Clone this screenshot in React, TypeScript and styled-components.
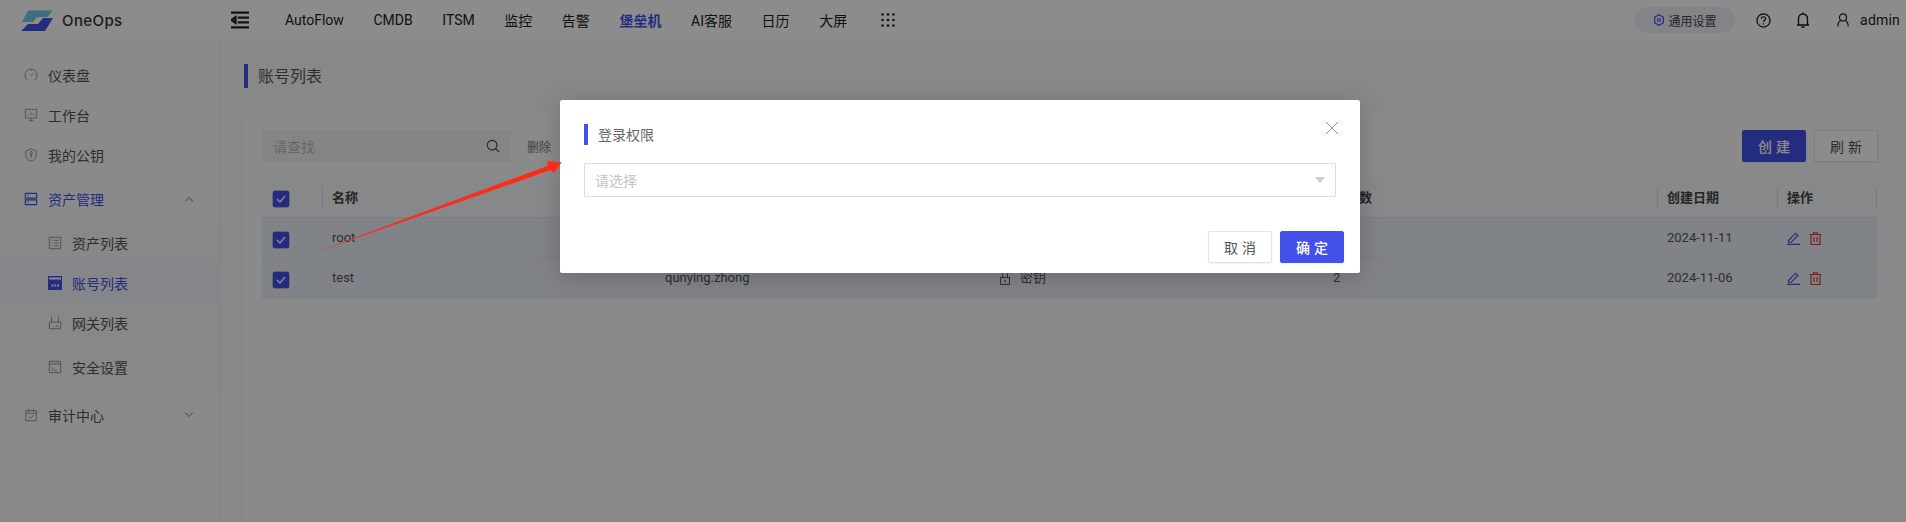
import React from "react";
import styled, { createGlobalStyle } from "styled-components";

const Global = createGlobalStyle`
  html, body { margin: 0; padding: 0; height: 522px; overflow: hidden; }
  #root { height: 522px; }
  * { box-sizing: border-box; }
  body { font-family: "Roboto", "Noto Sans CJK SC", sans-serif; color: #333; background: #fff; }
`;
const BLUE = "#4350ea";
const FONT = `"Roboto", "Noto Sans CJK SC", sans-serif`;

const Page = styled.div`position: relative; height: 522px; display: flex; flex-direction: column; overflow: hidden;`;
const Header = styled.header`height: 40px; flex: none; display: flex; align-items: center; background: #fff; font-size: 14px; color: #222;`;
const Brand = styled.div`width: 231px; flex: none; display: flex; align-items: center; padding-left: 21px; gap: 9px; font: 500 15px "Inter", sans-serif; letter-spacing: .4px; color: #333;`;
const Nav = styled.nav`display: flex; align-items: center; margin-left: 21.2px; flex: 1;`;
const NavItem = styled.span<{ $active?: boolean }>`padding: 0 14.8px; white-space: nowrap; font-weight: ${p => p.$active ? 700 : 400}; color: ${p => p.$active ? BLUE : "#222"}; font-size: 14px;`;
const GridItem = styled(NavItem)`margin-left: 4px;`;
const Tools = styled.div`display: flex; align-items: center; padding-right: 6px;`;
const Pill = styled.div`height: 26px; width: 100px; border-radius: 13px; background: #eef1f7; display: flex; align-items: center; justify-content: center; gap: 5px; font-size: 12px; color: #444;`;
const HexIcon = styled.span`display: flex; color: ${BLUE};`;
const Tool = styled.span<{ $first?: boolean }>`display: flex; align-items: center; justify-content: center; width: 40px; margin-left: ${p => p.$first ? 8 : 0}px; color: #111;`;
const Admin = styled.span`display: flex; align-items: center; gap: 10px; font-size: 14px; letter-spacing: .2px; margin-left: 13px; color: #222;`;

const Body = styled.div`flex: 1; display: flex; min-height: 0;`;
const Side = styled.aside`width: 220px; flex: none; background: #fcfcfc; border-right: 1px solid #eee; padding-top: 15px; font-size: 14px;`;
const MenuIcon = styled.span<{ $active?: boolean }>`display: flex; flex: none; color: ${p => p.$active ? BLUE : "#8c8c96"};`;
const MenuItem = styled.div<{ $active?: boolean; $h?: number }>`height: ${p => p.$h ?? 40}px; display: flex; align-items: center; padding: 0 24px; gap: 10px; color: ${p => p.$active ? BLUE : "#555"};`;
const Caret = styled.span`margin-left: auto; display: flex; color: #aaa;`;
const SubMenu = styled.div`background: #f7f7f7;`;
const SubItem = styled.div<{ $active?: boolean; $h?: number }>`height: ${p => p.$h ?? 40}px; display: flex; align-items: center; padding-left: 48px; gap: 10px; background: ${p => p.$active ? "#f2f5fb" : "transparent"}; color: ${p => p.$active ? BLUE : "#555"};`;

const Main = styled.main`flex: 1; min-width: 0; background: #f7f7f8; padding: 24px 11px 0 24px;`;
const TitleRow = styled.div`height: 24px; border-left: 4px solid ${BLUE}; padding-left: 10px; font-size: 16px; line-height: 26px; color: #555;`;
const Card = styled.section`margin-top: 24px; background: #fbfbfb; border-radius: 12px 12px 0 0; height: 430px; padding: 18px 17px 0 18px;`;
const Toolbar = styled.div`height: 32px; display: flex; align-items: center;`;
const Search = styled.div`width: 249px; height: 32px; background: #f3f3f4; display: flex; align-items: center; justify-content: space-between; padding: 0 11px; font-size: 14px; color: #bbb;`;
const SearchIcon = styled.span`display: flex; color: #444;`;
const Del = styled.span`margin-left: 16px; font-size: 12px; color: #777;`;
const Grow = styled.span`flex: 1;`;
const Btn = styled.button<{ $primary?: boolean }>`width: 64px; height: 32px; border-radius: 2px; font: ${p => p.$primary ? 500 : 400} 14px ${FONT}; letter-spacing: 4px; padding: 0 0 0 4px; border: 1px solid ${p => p.$primary ? BLUE : "#e3e3e6"}; background: ${p => p.$primary ? BLUE : "#fff"}; color: ${p => p.$primary ? "#fff" : "#555"}; box-shadow: 0 1px 2px rgba(0,0,0,.06);`;
const Gap = styled.span`width: 8px;`;

const Table = styled.div`margin-top: 16px; font-size: 13px; color: #555;`;
const Row = styled.div<{ $head?: boolean }>`display: grid; grid-template-columns: 60px 333px 335px 333px 334px 120px 100px; height: 40px; align-items: center; padding-top: ${p => p.$head ? 0 : 1}px; background: ${p => p.$head ? "#f5f7fa" : "#eaeef6"}; border-bottom: 1px solid #e1e4e9; font-weight: ${p => p.$head ? 600 : 400}; color: ${p => p.$head ? "#444" : "#555"};`;
const Cell = styled.div<{ $sep?: boolean; $gap?: number }>`height: 20px; line-height: 20px; padding-left: 9px; border-left: 1px solid ${p => p.$sep ? "#d9dbe0" : "transparent"}; display: flex; align-items: center; gap: ${p => p.$gap ?? 6}px;`;
const EndCell = styled(Cell)`border-right: 1px solid #d9dbe0;`;
const CheckCell = styled.div`padding: 3px 0 0 11px; display: flex;`;
const Check = styled.span`width: 16px; height: 16px; background: ${BLUE}; border-radius: 2px; display: flex; align-items: center; justify-content: center; box-shadow: 0 0 0 .5px #9a7ab0;`;

const Overlay = styled.div`position: absolute; inset: 0; background: rgba(0,0,0,.45);`;
const Modal = styled.div`position: absolute; left: 560px; top: 100px; width: 800px; height: 173px; background: #fff; border-radius: 2px; box-shadow: 0 4px 24px rgba(0,0,0,.18); padding: 24px 16px 0 24px; display: flex; flex-direction: column;`;
const ModalTitle = styled.div`height: 21px; border-left: 4px solid ${BLUE}; padding-left: 10px; font-size: 14px; line-height: 22px; color: #666;`;
const Close = styled.span`position: absolute; right: 21px; top: 21px; display: flex; color: #888;`;
const Select = styled.div`margin-top: 18px; width: 752px; height: 34px; border: 1px solid #dcdcdc; border-radius: 2px; display: flex; align-items: center; justify-content: space-between; padding: 0 10px; font-size: 14px; color: #c4c4c4;`;
const Arrow = styled.span`width: 0; height: 0; border: 5px solid transparent; border-top: 6px solid #ccc; border-bottom: 0;`;
const Foot = styled.div`margin-top: 34px; display: flex; justify-content: flex-end; gap: 8px;`;
const Annotation = styled.svg`position: absolute; left: 0; top: 0; pointer-events: none;`;

const I = ({ d, s = 16, w = 1 }: { d: string; s?: number; w?: number }) => (
  <svg width={s} height={s} viewBox="0 0 16 16" fill="none" stroke="currentColor" strokeWidth={w} style={{ flex: "none" }}><path d={d} /></svg>
);
const Tick = () => <svg width="10" height="8" viewBox="0 0 10 8" fill="none" stroke="#fff" strokeWidth="1.4"><path d="M1 4l3 3 5-6" /></svg>;
const Logo = () => (
  <svg width="32" height="21" viewBox="0 0 32 21" style={{ flex: "none" }}><path d="M7 .5H31.500L26.500 7H16l-4 5H1z" fill="#72c8ea" /><path d="M0 21l7-7h10l5-6h10l-8 13z" fill="#4350ea" /></svg>
);
const Pencil = () => <svg width="13" height="13" viewBox="0 0 13 13" fill="none" stroke={BLUE} strokeWidth="1.1"><path d="M1.500 8.500L8.500 1.200l2.500 2.300-7 6.800H1.500zM0 12.400h13" /></svg>;
const Trash = () => <svg width="13" height="13" viewBox="0 0 13 13" fill="none" stroke="#e02f2f" strokeWidth="1.1"><path d="M.5 2.500h12M4.500 2.500V.7h4v1.800M2 2.500v10h9v-10M5 5v5M8 5v5" /></svg>;
const Lock = () => <svg width="10" height="13" viewBox="0 0 10 13" fill="none" stroke="#555"><path d="M.5 5.500h9v7h-9zM2.500 5.500V2.500a2.500 2.500 0 015 0v3M5 8v2.500" /></svg>;

const rows = [
  { name: "root", owner: "", date: "2024-11-11" },
  { name: "test", owner: "qunying.zhong", date: "2024-11-06" },
];
const navs = ["AutoFlow", "CMDB", "ITSM", "监控", "告警", "堡垒机", "AI客服", "日历", "大屏"];

export default function App() {
  return (
    <Page>
      <Global />
      <Header>
        <Brand><Logo />OneOps</Brand>
        <I s={18} w={2} d="M0 1.500h16M6 5.800h10M6 10.200h10M0 14.500h16M4 5.500v5L.5 8z" />
        <Nav>
          {navs.map(n => <NavItem key={n} $active={n === "堡垒机"}>{n}</NavItem>)}
          <GridItem><svg width="14" height="14" viewBox="0 0 14 14" fill="#222" style={{ display: "block" }}>{[1.5, 7, 12.5].flatMap(y => [1.5, 7, 12.5].map(x => <circle key={`${x}${y}`} cx={x} cy={y} r="1.3" />))}</svg></GridItem>
        </Nav>
        <Tools>
          <Pill><HexIcon><svg width="10" height="12" viewBox="0 0 10 12" fill="none" stroke="currentColor" strokeWidth="1.2"><path d="M5 .7l4.300 2.500v5.600L5 11.300.7 8.800V3.200zM5 4.500a1.500 1.500 0 100 3 1.500 1.500 0 000-3z" /></svg></HexIcon>通用设置</Pill>
          <Tool $first><I s={15} w={1.3} d="M8 1a7 7 0 100 14A7 7 0 008 1zM5.800 6.200a2.200 2.200 0 114.400 0c0 1.500-2.200 1.600-2.200 3.300M8 10.800v1.400" /></Tool>
          <Tool><I s={16} w={1.3} d="M3.500 13V6.500a4.500 4.500 0 019 0V13zM2 13h12M6.500 15h3M8 .5V2" /></Tool>
          <Admin><I s={14} w={1.4} d="M8 1a4 4 0 100 8 4 4 0 000-8zM2 15.500c0-4 1.500-6 3.500-7M14 15.500c0-4-1.500-6-3.500-7" />admin</Admin>
        </Tools>
      </Header>
      <Body>
        <Side>
          <MenuItem><MenuIcon><I s={14} d="M4 14a7 7 0 118 0M8 9l2.500-3.500M8 2v1M2 8h1M13 8h1" /></MenuIcon>仪表盘</MenuItem>
          <MenuItem><MenuIcon><I s={14} d="M1.500 1.500h13v10h-13zM5.500 14.500h5M8 11.500v3M5 8.500V7M8 8.500V5M11 8.500V6" /></MenuIcon>工作台</MenuItem>
          <MenuItem><MenuIcon><I s={14} d="M8 1l6 2.500V9c0 3-3 5-6 6-3-1-6-3-6-6V3.500zM8 4a1.500 1.500 0 100 3 1.500 1.500 0 000-3zM8 7v4M8 9h1.500" /></MenuIcon>我的公钥</MenuItem>
          <MenuItem $active $h={48}><MenuIcon $active><I s={14} w={1.3} d="M1.500 1.500h13v5.500h-13zM1.500 9h13v5.500h-13zM4 4h1.500M4 11.500h1.500" /></MenuIcon>资产管理<Caret><I s={12} w={1.6} d="M3 11l5-5 5 5" /></Caret></MenuItem>
          <SubMenu>
            <SubItem><MenuIcon><I s={14} d="M1.500 1.500h13v13h-13zM4 5h1M7 5h5M4 8h1M7 8h5M4 11h1M7 11h5" /></MenuIcon>资产列表</SubItem>
            <SubItem $active><svg width="14" height="14" viewBox="0 0 14 14" style={{ flex: "none" }}><path d="M0 0h14v14H0z" fill={BLUE} /><path d="M1 1.500h12v2H1z" fill="#fff" /><path d="M3.500 8h2v3h-2zM6.500 8h1.500v3H6.500zM9 8h2v3H9z" fill="#fff" opacity=".7" /></svg>账号列表</SubItem>
            <SubItem><MenuIcon><I s={14} d="M1.500 7h13v7.500h-13zM4 7V1M12 7V1M9 11.500h3" /></MenuIcon>网关列表</SubItem>
            <SubItem $h={48}><MenuIcon><I s={14} d="M1.500 1.500h13v13h-13zM1.500 4.500h13M4 8l2 2-2 2M7 12h3" /></MenuIcon>安全设置</SubItem>
          </SubMenu>
          <MenuItem $h={48}><MenuIcon><I s={14} d="M2 3h12v11.500H2zM5 1v3M11 1v3M2 6h12M5.500 10l2 2 3.500-4" /></MenuIcon>审计中心<Caret><I s={12} w={1.6} d="M3 5l5 5 5-5" /></Caret></MenuItem>
        </Side>
        <Main>
          <TitleRow>账号列表</TitleRow>
          <Card>
            <Toolbar>
              <Search>请查找<SearchIcon><I s={14} w={1.3} d="M7 1.500a5.500 5.500 0 100 11 5.500 5.500 0 000-11zM11 11l4 4" /></SearchIcon></Search>
              <Del>删除</Del>
              <Grow />
              <Btn $primary>创建</Btn><Gap /><Btn>刷新</Btn>
            </Toolbar>
            <Table>
              <Row $head>
                <CheckCell><Check><Tick /></Check></CheckCell>
                <Cell $sep>名称</Cell><Cell>所属用户</Cell><Cell>认证方式</Cell><Cell>资产数</Cell><Cell $sep>创建日期</Cell><EndCell $sep>操作</EndCell>
              </Row>
              {rows.map(r => (
                <Row key={r.name}>
                  <CheckCell><Check><Tick /></Check></CheckCell>
                  <Cell>{r.name}</Cell>
                  <Cell>{r.owner}</Cell>
                  <Cell $gap={10}><Lock />密钥</Cell>
                  <Cell>2</Cell>
                  <Cell>{r.date}</Cell>
                  <Cell $gap={9}><Pencil /><Trash /></Cell>
                </Row>
              ))}
            </Table>
          </Card>
        </Main>
      </Body>
      <Overlay />
      <Modal>
        <ModalTitle>登录权限</ModalTitle>
        <Close><I s={14} w={1.1} d="M1 1l14 14M15 1L1 15" /></Close>
        <Select>请选择<Arrow /></Select>
        <Foot><Btn>取消</Btn><Btn $primary>确定</Btn></Foot>
      </Modal>
      <Annotation width="1906" height="522" viewBox="0 0 1906 522">
        <path d="M308 255L548 165.700L546.700 161L561.700 162.300L554 173L550.700 170Z" fill="#ff2a1a" />
      </Annotation>
    </Page>
  );
}
